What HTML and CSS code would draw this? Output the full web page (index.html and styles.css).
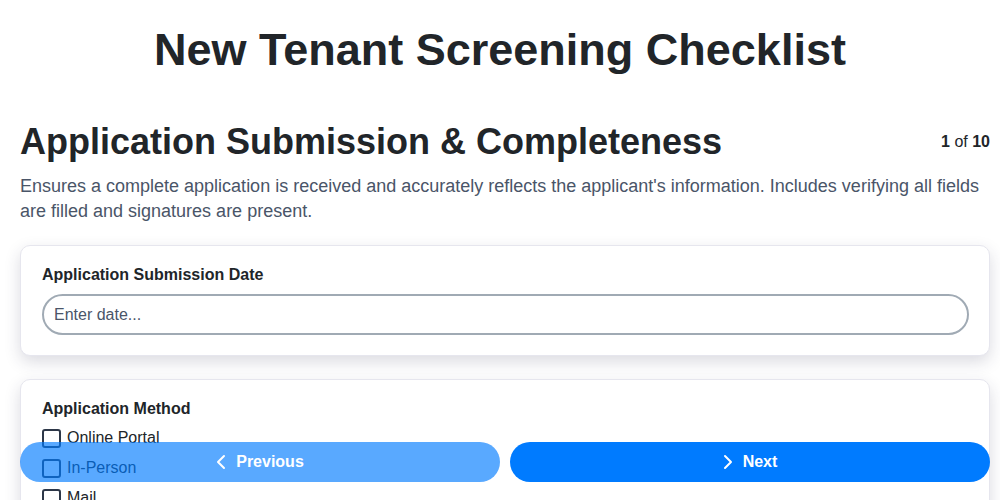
FILE: index.html
```html
<!DOCTYPE html>
<html lang="en">
<head>
<meta charset="utf-8">
<title>New Tenant Screening Checklist</title>
<link rel="stylesheet" href="styles.css">
</head>
<body>
<div class="page">
  <h1 class="title">New Tenant Screening Checklist</h1>
  <section class="step">
    <div class="step-head">
      <h2 class="step-title">Application Submission &amp; Completeness</h2>
      <div class="step-count"><b>1</b> of <b>10</b></div>
    </div>
    <p class="step-desc">Ensures a complete application is received and accurately reflects the applicant's information. Includes verifying all fields are filled and signatures are present.</p>

    <div class="card">
      <label class="field-label" for="date">Application Submission Date</label>
      <input class="text-input" id="date" type="text" placeholder="Enter date...">
    </div>

    <div class="card">
      <div class="field-label">Application Method</div>
      <label class="check-row"><span class="box"></span><span>Online Portal</span></label>
      <label class="check-row"><span class="box"></span><span>In-Person</span></label>
      <label class="check-row"><span class="box"></span><span>Mail</span></label>
      <label class="check-row"><span class="box"></span><span>Email</span></label>
    </div>
  </section>
</div>
<nav class="nav">
  <button class="btn btn-prev" disabled>
    <svg class="chev" width="10" height="16" viewBox="0 0 10 16"><path d="M8 2 L2 8 L8 14" fill="none" stroke="#fff" stroke-width="2" stroke-linecap="round" stroke-linejoin="round"/></svg>
    <span>Previous</span>
  </button>
  <button class="btn btn-next">
    <svg class="chev" width="10" height="16" viewBox="0 0 10 16"><path d="M2 2 L8 8 L2 14" fill="none" stroke="#fff" stroke-width="2" stroke-linecap="round" stroke-linejoin="round"/></svg>
    <span>Next</span>
  </button>
</nav>
</body>
</html>
```
FILE: styles.css
```css
* { box-sizing: border-box; }
html, body { margin: 0; padding: 0; background: #fff; }
body {
  font-family: "Liberation Sans", Arial, sans-serif;
  color: #212529;
  overflow: hidden;
}
.page { padding: 0 10px 0 20px; }
.title {
  margin: 24px -10px 0 -20px;
  font-size: 45px;
  line-height: 52px;
  font-weight: 700;
  text-align: center;
}
.step-head {
  margin-top: 44px;
  display: flex;
  justify-content: space-between;
  align-items: center;
}
.step-title {
  margin: 0;
  font-size: 36px;
  line-height: 44px;
  font-weight: 700;
}
.step-count { font-size: 16px; color: #212529; }
.step-desc {
  margin: 10px 0 21px;
  font-size: 18px;
  line-height: 25px;
  color: #4a5568;
}
.card {
  background: #fff;
  border: 1px solid #e6e6ee;
  border-radius: 10px;
  box-shadow: 0 6px 16px rgba(40, 40, 80, 0.17);
  padding: 20px 20px 20px 21px;
  margin-bottom: 23px;
  display: flex;
  flex-direction: column;
}
.field-label {
  font-size: 16px;
  line-height: 18px;
  font-weight: 700;
  color: #212529;
  margin-bottom: 10px;
}
.card .field-label + .check-row { margin-top: -5px; }
.text-input {
  height: 41px;
  border: 2px solid #a0aab4;
  border-radius: 21px;
  padding: 0 10px;
  font-family: "Liberation Sans", Arial, sans-serif;
  font-size: 16px;
  color: #212529;
  outline: none;
}
.text-input::placeholder { color: #4a5568; }
.check-row {
  display: flex;
  align-items: center;
  gap: 6px;
  height: 30px;
  font-size: 16px;
  color: #212529;
}
.box {
  width: 19px;
  height: 19px;
  border: 2px solid #2d3748;
  border-radius: 3px;
  background: #fff;
}
.nav {
  position: fixed;
  left: 20px;
  right: 10px;
  bottom: 18px;
  display: flex;
  gap: 10px;
}
.btn {
  flex: 1;
  height: 40px;
  border: none;
  border-radius: 20px;
  background: #007bff;
  color: #fff;
  font-family: "Liberation Sans", Arial, sans-serif;
  font-size: 16px;
  font-weight: 700;
  display: flex;
  align-items: center;
  justify-content: center;
  gap: 10px;
}
.btn-prev { opacity: 0.65; }
.chev { display: block; }
```
